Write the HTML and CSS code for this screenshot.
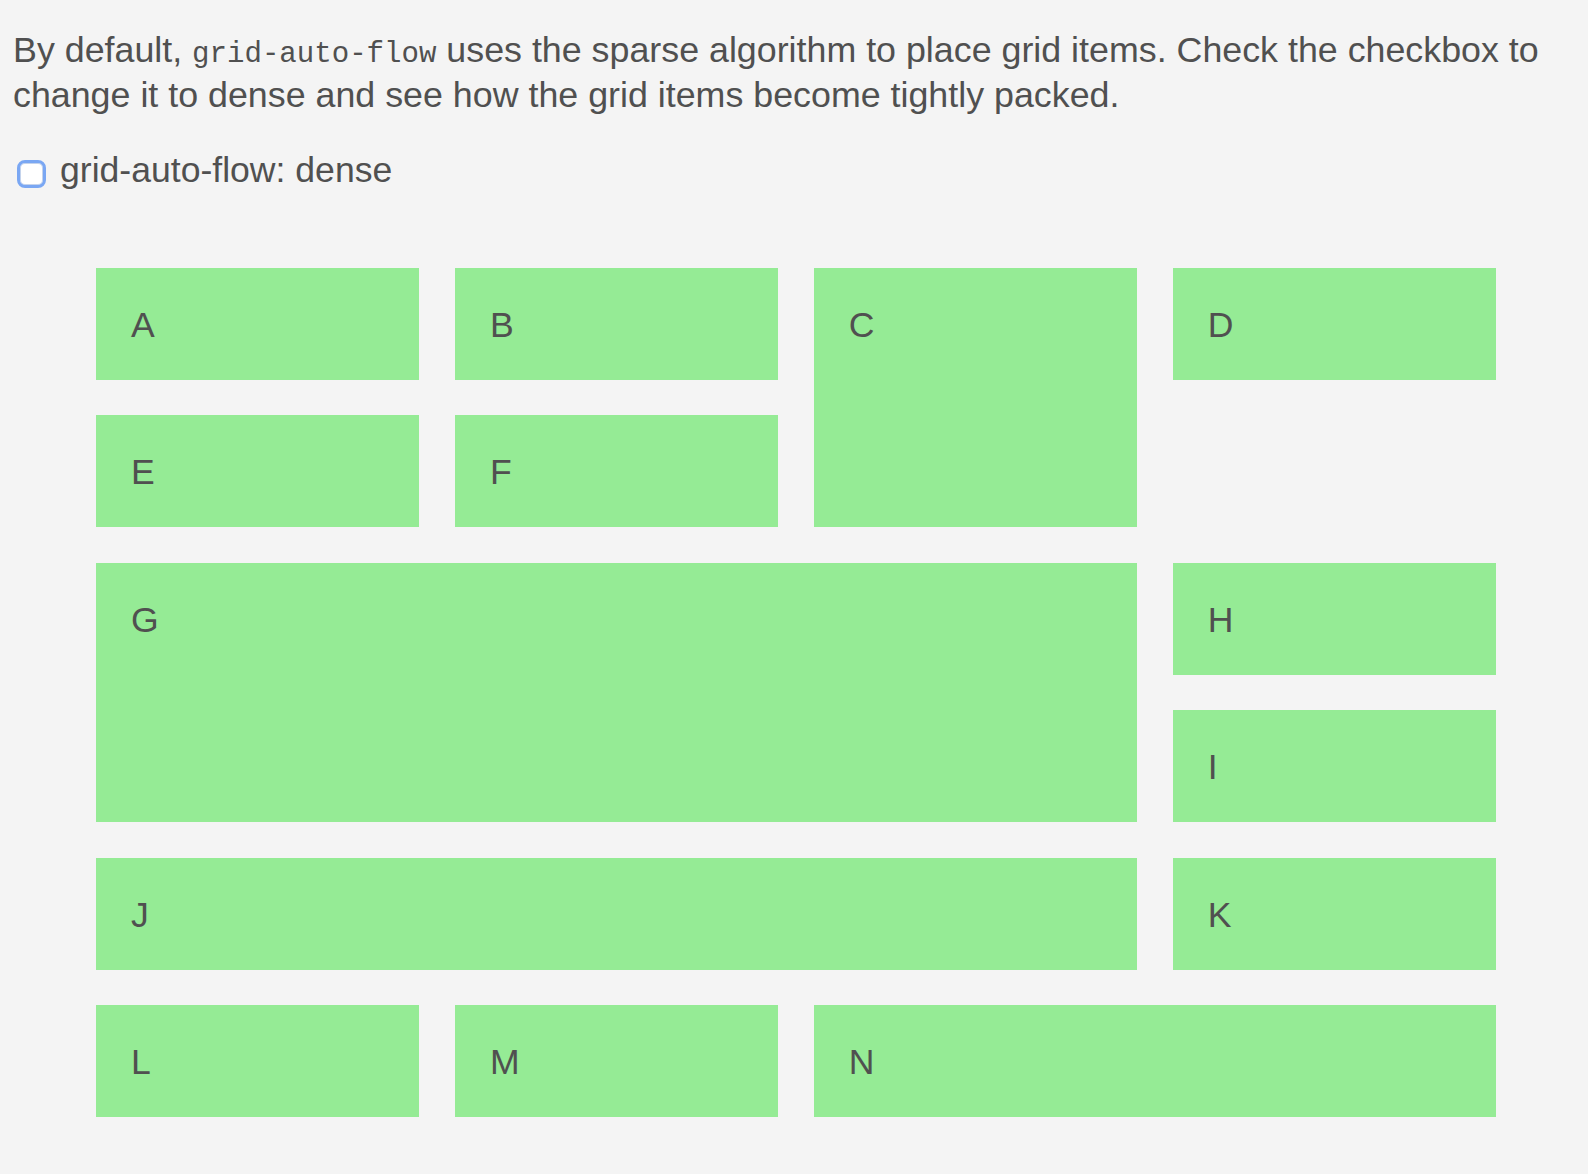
FILE: index.html
```html
<!DOCTYPE html>
<html lang="en">
<head>
<meta charset="utf-8">
<title>grid-auto-flow demo</title>
<link rel="stylesheet" href="styles.css">
</head>
<body>
<main class="demo">
  <p class="intro">By default, <code>grid-auto-flow</code> uses the sparse algorithm to place grid items. Check the checkbox to change it to dense and see how the grid items become tightly packed.</p>
  <label class="toggle"><input type="checkbox" id="dense" class="toggle-box"><span>grid-auto-flow: dense</span></label>
  <div class="grid">
    <div class="item">A</div>
    <div class="item">B</div>
    <div class="item tall">C</div>
    <div class="item">D</div>
    <div class="item">E</div>
    <div class="item">F</div>
    <div class="item big">G</div>
    <div class="item">H</div>
    <div class="item">I</div>
    <div class="item wide3">J</div>
    <div class="item">K</div>
    <div class="item">L</div>
    <div class="item">M</div>
    <div class="item wide2">N</div>
  </div>
</main>
</body>
</html>
```

FILE: styles.css
```css
html, body {
  margin: 0;
  padding: 0;
  background: #f4f4f4;
}

body {
  font-family: "Liberation Sans", Arial, Helvetica, sans-serif;
  font-size: 35.6px;
  color: #505050;
}

.demo {
  padding: 29.5px 20px 60px 13px;
}

.intro {
  margin: 0 0 34px 0;
  line-height: 41px;
  font-size: 35.8px;
}

.intro code {
  font-family: "Liberation Mono", "Courier New", monospace;
  font-size: 0.8125em;
}

.toggle {
  display: flex;
  align-items: flex-start;
  line-height: 41px;
  cursor: pointer;
}

.toggle-box {
  appearance: none;
  -webkit-appearance: none;
  box-sizing: border-box;
  width: 29px;
  height: 28px;
  margin: 10px 14px 0 4px;
  border: 3.5px solid #7aa7f3;
  border-radius: 8px;
  background: #ffffff;
  box-shadow: inset 0 0 0 1px #c4d3ec;
  flex: none;
}

.toggle-box:checked {
  background: #3b82f6;
  border-color: #3b82f6;
}

.grid {
  display: grid;
  grid-template-columns: repeat(4, 1fr);
  grid-auto-rows: 112px;
  gap: 35.6px;
  margin: 77px 0 0 83px;
  width: 1400px;
}

.demo:has(.toggle-box:checked) .grid {
  grid-auto-flow: dense;
}

.item {
  background: #95eb95;
  padding: 37px 35px 0 35px;
  line-height: 41px;
  color: #505050;
}

.tall {
  grid-row: span 2;
}

.big {
  grid-column: span 3;
  grid-row: span 2;
}

.wide3 {
  grid-column: span 3;
}

.wide2 {
  grid-column: span 2;
}
```
